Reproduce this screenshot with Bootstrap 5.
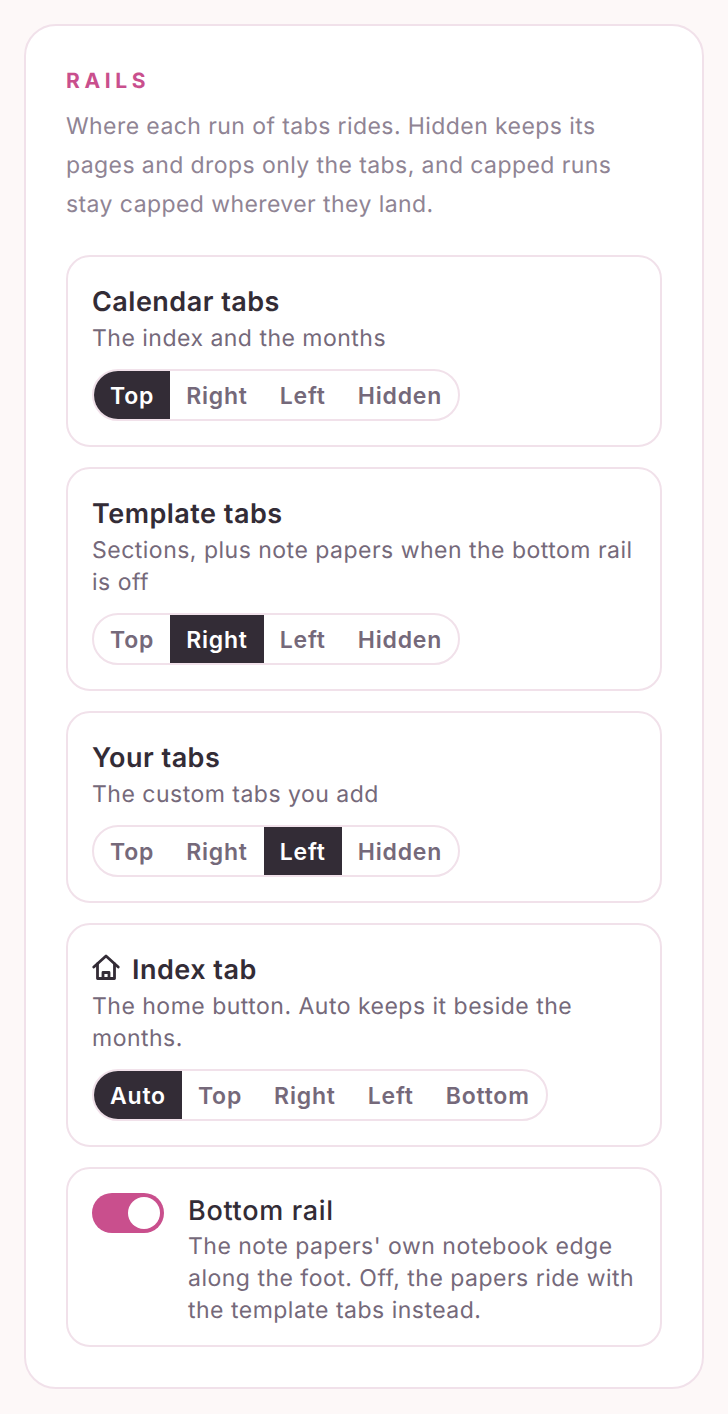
<!doctype html>
<html lang="en">
<head>
<meta charset="utf-8">
<title>Rails</title>
<link href="https://cdn.jsdelivr.net/npm/bootstrap@5.3.0/dist/css/bootstrap.min.css" rel="stylesheet">
<style>
body{background:#fdf8f8;font-family:Inter,"Liberation Sans",sans-serif;color:#332c36;padding:24px;text-rendering:geometricPrecision}
.rail-panel{background:#fff;border:2px solid #f1e1ea;border-radius:32px;padding:40px}
.rail-head{color:#c94f8d;font-size:21px;font-weight:700;letter-spacing:.22em;line-height:32px;margin:0}
.rail-intro{color:#8f8494;font-size:23px;letter-spacing:.42px;line-height:39px;margin:9px 0 31px}
.rail-stack{display:flex;flex-direction:column;gap:20px}
.rail-item{border:2px solid #f1e1ea;border-radius:24px;padding:24px}
.rail-title{font-size:27px;font-weight:600;letter-spacing:.48px;line-height:41px;color:#332c36;margin:0}
.rail-desc{font-size:23px;letter-spacing:.49px;line-height:32px;color:#75697a;margin:0}
.seg{display:inline-flex;border:2px solid #f1e1ea;border-radius:26px;overflow:hidden;margin-top:15px;vertical-align:top}
.seg-btn{border:0;background:transparent;color:#75697a;font:600 23px/46px Inter,sans-serif;letter-spacing:.8px;padding:2px 16px 0}
.seg-btn.on{background:#332c36;color:#fff}
.rail-row{padding:22px 24px 19px}
.rail-switch{width:72px;height:40px;border-radius:20px;background:#c94f8d;flex:none;display:flex;justify-content:flex-end;align-items:center;padding:4px;margin-top:2px}
.rail-knob{width:32px;height:32px;border-radius:50%;background:#fff}
.rail-name{font-size:27px;font-weight:500;letter-spacing:.7px;line-height:39px;color:#332c36;margin:0}
.rail-icon{margin-right:12px;margin-bottom:4px;flex:none}
</style>
</head>
<body>
<div class="rail-panel">
  <h2 class="rail-head">RAILS</h2>
  <p class="rail-intro">Where each run of tabs rides. Hidden keeps its pages and drops only the tabs, and capped runs stay capped wherever they land.</p>
  <div class="rail-stack">
    <div class="rail-item">
      <h3 class="rail-title">Calendar tabs</h3>
      <p class="rail-desc">The index and the months</p>
      <div class="seg"><button class="seg-btn on">Top</button><button class="seg-btn">Right</button><button class="seg-btn">Left</button><button class="seg-btn">Hidden</button></div>
    </div>
    <div class="rail-item">
      <h3 class="rail-title">Template tabs</h3>
      <p class="rail-desc">Sections, plus note papers when the bottom rail is off</p>
      <div class="seg"><button class="seg-btn">Top</button><button class="seg-btn on">Right</button><button class="seg-btn">Left</button><button class="seg-btn">Hidden</button></div>
    </div>
    <div class="rail-item">
      <h3 class="rail-title">Your tabs</h3>
      <p class="rail-desc">The custom tabs you add</p>
      <div class="seg"><button class="seg-btn">Top</button><button class="seg-btn">Right</button><button class="seg-btn on">Left</button><button class="seg-btn">Hidden</button></div>
    </div>
    <div class="rail-item">
      <h3 class="rail-title d-flex align-items-center">
        <svg class="rail-icon" width="28" height="28" viewBox="0 0 28 28" fill="none" stroke="#332c36" stroke-width="2.8" stroke-linejoin="round" stroke-linecap="round"><path d="M1.8 13 14 2 26.2 13"/><path d="M5.5 10v14.5h17V10"/><path d="M11 24.500V18.500h6v6"/></svg>Index tab</h3>
      <p class="rail-desc">The home button. Auto keeps it beside the months.</p>
      <div class="seg"><button class="seg-btn on">Auto</button><button class="seg-btn">Top</button><button class="seg-btn">Right</button><button class="seg-btn">Left</button><button class="seg-btn">Bottom</button></div>
    </div>
    <div class="rail-item rail-row d-flex gap-4">
      <div class="rail-switch"><div class="rail-knob"></div></div>
      <div>
        <h3 class="rail-name">Bottom rail</h3>
        <p class="rail-desc">The note papers' own notebook edge along the foot. Off, the papers ride with the template tabs instead.</p>
      </div>
    </div>
  </div>
</div>
<script src="https://cdn.jsdelivr.net/npm/bootstrap@5.3.0/dist/js/bootstrap.bundle.min.js"></script>
</body>
</html>
